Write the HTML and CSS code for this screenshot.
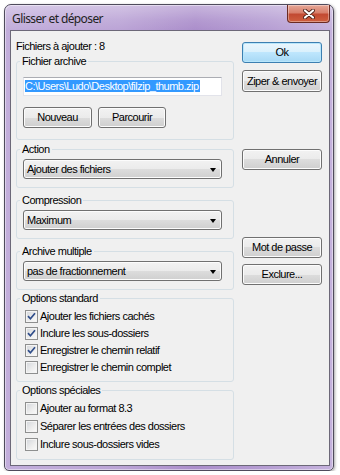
FILE: index.html
```html
<!DOCTYPE html>
<html lang="fr">
<head>
  <meta charset="UTF-8">
  <title>Glisser et déposer</title>
  <link rel="stylesheet" href="styles.css">
</head>
<body>

  <div class="window">
    <!-- Title bar -->
    <div class="titlebar">
      <span class="title">Glisser et déposer</span>
      <div class="close">
        <svg width="12" height="10" viewBox="0 0 12 10">
          <path d="M2 1.5 L10 8.5 M10 1.5 L2 8.5" stroke="#4a2018" stroke-width="3.8" stroke-linecap="round"/>
          <path d="M2 1.5 L10 8.5 M10 1.5 L2 8.5" stroke="#ffffff" stroke-width="2.2" stroke-linecap="round"/>
        </svg>
      </div>
    </div>

    <div class="client">
      <div class="main">
        <div class="count">Fichiers à ajouter : 8</div>

        <fieldset class="group archive">
          <legend>Fichier archive</legend>
          <div class="textbox"><span class="selected">C:\Users\Ludo\Desktop\filzip_thumb.zip</span></div>
          <div class="btn-row">
            <div class="btn btn-new">Nouveau</div>
            <div class="btn btn-browse">Parcourir</div>
          </div>
        </fieldset>

        <fieldset class="group combo-group first-combo">
          <legend>Action</legend>
          <div class="combo">Ajouter des fichiers<span class="arrow"></span></div>
        </fieldset>

        <fieldset class="group combo-group">
          <legend>Compression</legend>
          <div class="combo">Maximum<span class="arrow"></span></div>
        </fieldset>

        <fieldset class="group combo-group">
          <legend>Archive multiple</legend>
          <div class="combo">pas de fractionnement<span class="arrow"></span></div>
        </fieldset>

        <fieldset class="group checks std">
          <legend>Options standard</legend>
          <div class="check"><span class="cb on"><svg width="11" height="11" viewBox="0 0 11 11"><path d="M2 5.2 L4.4 7.8 L9 2.2" fill="none" stroke="#2f4d8a" stroke-width="1.7"/></svg></span>Ajouter les fichiers cachés</div>
          <div class="check"><span class="cb on"><svg width="11" height="11" viewBox="0 0 11 11"><path d="M2 5.2 L4.4 7.8 L9 2.2" fill="none" stroke="#2f4d8a" stroke-width="1.7"/></svg></span>Inclure les sous-dossiers</div>
          <div class="check"><span class="cb on"><svg width="11" height="11" viewBox="0 0 11 11"><path d="M2 5.2 L4.4 7.8 L9 2.2" fill="none" stroke="#2f4d8a" stroke-width="1.7"/></svg></span>Enregistrer le chemin relatif</div>
          <div class="check"><span class="cb"></span>Enregistrer le chemin complet</div>
        </fieldset>

        <fieldset class="group checks special">
          <legend>Options spéciales</legend>
          <div class="check"><span class="cb"></span>Ajouter au format 8.3</div>
          <div class="check"><span class="cb"></span>Séparer les entrées des dossiers</div>
          <div class="check"><span class="cb"></span>Inclure sous-dossiers vides</div>
        </fieldset>
      </div>

      <div class="side">
        <div class="btn btn-default btn-ok">Ok</div>
        <div class="btn btn-zip">Ziper &amp; envoyer</div>
        <div class="btn btn-cancel">Annuler</div>
        <div class="btn btn-pass">Mot de passe</div>
        <div class="btn btn-exclude">Exclure...</div>
      </div>
    </div>
  </div>

</body>
</html>
```

FILE: styles.css
```css
/* Page */
body {
  margin: 0;
  background: #ffffff;
  font-family: "Liberation Sans", Arial, sans-serif;
  font-size: 11px;
  letter-spacing: -0.5px;
  color: #000000;
}

/* Window frame (Aero, purple tint) */
.window {
  margin: 4px 0 0 4px;
  width: 330px;
  height: 467px;
  box-sizing: border-box;
  border: 1px solid #4f4b5c;
  border-radius: 7px 7px 5px 5px;
  background: linear-gradient(90deg, #c2aedb 0%, #bba4d6 35%, #ab8ecb 58%, #b69ed3 80%, #c5b2dd 100%);
  box-shadow: inset 0 0 0 1px rgba(255, 255, 255, 0.45), 1px 1px 3px rgba(0, 0, 0, 0.35);
  display: flex;
  flex-direction: column;
}

.titlebar {
  height: 25px;
  display: flex;
  justify-content: space-between;
  align-items: flex-start;
  padding: 0 3px 0 7px;
  background: linear-gradient(180deg, rgba(255, 255, 255, 0.35) 0%, rgba(255, 255, 255, 0.1) 60%, rgba(255, 255, 255, 0) 100%);
  border-radius: 6px 6px 0 0;
}

.title {
  font-family: "Noto Sans", "Open Sans", sans-serif;
  font-size: 12px;
  letter-spacing: -0.6px;
  line-height: 16px;
  margin-top: 6px;
  color: #222222;
}

.close {
  width: 43px;
  height: 18px;
  box-sizing: border-box;
  border: 1px solid #6a2b22;
  border-top: none;
  border-radius: 0 0 4px 4px;
  background: linear-gradient(180deg, #e6a797 0%, #d8806c 45%, #c24a32 55%, #cf5f3f 100%);
  box-shadow: inset 0 0 0 1px rgba(255, 255, 255, 0.35);
  display: flex;
  align-items: center;
  justify-content: center;
}

/* Client area */
.client {
  margin: 0 3px 4px 5px;
  height: 436px;
  box-sizing: border-box;
  border: 1px solid #6c6878;
  background: #f0f0f0;
  display: grid;
  grid-template-columns: 218px 80px;
  column-gap: 8px;
  padding: 0 7px 0 5px;
  align-items: start;
}

.main {
  display: flex;
  flex-direction: column;
}

.count {
  margin-top: 9px;
  line-height: 13px;
}

/* Group boxes */
.group {
  margin: 0;
  border: 1px solid #d5dfe5;
  border-radius: 3px;
  padding: 0 11px 8px 6px;
  min-width: 0;
}

.group legend {
  padding: 0 2px;
  margin-left: -3px;
  line-height: 13px;
}

.archive {
  margin-top: 2px;
  padding-bottom: 11px;
}

.first-combo {
  margin-top: 3px;
}

.combo-group + .combo-group {
  margin-top: 6px;
}

.std {
  margin-top: 2px;
  padding-bottom: 5px;
}

.special {
  margin-top: 2px;
  padding-bottom: 5px;
}

/* Text box */
.textbox {
  margin-top: 9px;
  height: 19px;
  box-sizing: border-box;
  background: #ffffff;
  border: 1px solid #e2e3ea;
  border-top-color: #abadb3;
  padding: 2px 0 0 1px;
  line-height: 13px;
  white-space: nowrap;
  overflow: hidden;
}

.selected {
  background: #3399ff;
  color: #ffffff;
  padding-right: 1px;
}

/* Buttons */
.btn {
  height: 21px;
  box-sizing: border-box;
  border: 1px solid #707070;
  border-radius: 3px;
  background: linear-gradient(180deg, #f2f2f2 0%, #ebebeb 50%, #dddddd 50%, #cfcfcf 100%);
  box-shadow: inset 0 0 0 1px #fcfcfc;
  text-align: center;
  line-height: 19px;
  white-space: nowrap;
}

.btn-default {
  border-color: #3c7fb1;
  background: linear-gradient(180deg, #eaf6fd 0%, #d9f0fc 50%, #bee6fd 50%, #a7d9f5 100%);
  box-shadow: inset 0 0 0 1px #b8e6fb;
}

.btn-row {
  margin-top: 11px;
  display: flex;
  gap: 6px;
}

.btn-new { width: 69px; }
.btn-browse { width: 68px; }

.side {
  display: flex;
  flex-direction: column;
}

.btn-ok { margin-top: 11px; }
.btn-zip { margin-top: 7px; height: 22px; line-height: 20px; }
.btn-cancel { margin-top: 57px; }
.btn-pass { margin-top: 67px; }
.btn-exclude { margin-top: 6px; }

/* Combo boxes */
.combo {
  position: relative;
  margin-top: 3px;
  height: 20px;
  box-sizing: border-box;
  border: 1px solid #707070;
  border-radius: 3px;
  background: linear-gradient(180deg, #f2f2f2 0%, #ebebeb 50%, #dddddd 50%, #cfcfcf 100%);
  box-shadow: inset 0 0 0 1px #fcfcfc;
  padding-left: 3px;
  line-height: 18px;
}

.arrow {
  position: absolute;
  right: 5px;
  top: 8px;
  width: 0;
  height: 0;
  border-left: 3.5px solid transparent;
  border-right: 3.5px solid transparent;
  border-top: 4px solid #000000;
}

/* Check boxes */
.check {
  display: flex;
  align-items: flex-start;
  height: 17px;
  line-height: 16px;
}

.std .check:first-of-type,
.special .check:first-of-type {
  margin-top: 3px;
}

.special .check {
  height: 18px;
}

.cb {
  width: 13px;
  height: 13px;
  box-sizing: border-box;
  margin: 2px 2px 0 2px;
  border: 1px solid #8e8f8f;
  background: linear-gradient(135deg, #d2d5da 0%, #eeeeee 60%, #fbfbfb 100%);
  box-shadow: inset 0 0 0 1px #f4f4f4;
  display: flex;
  align-items: center;
  justify-content: center;
  flex: none;
}
```
